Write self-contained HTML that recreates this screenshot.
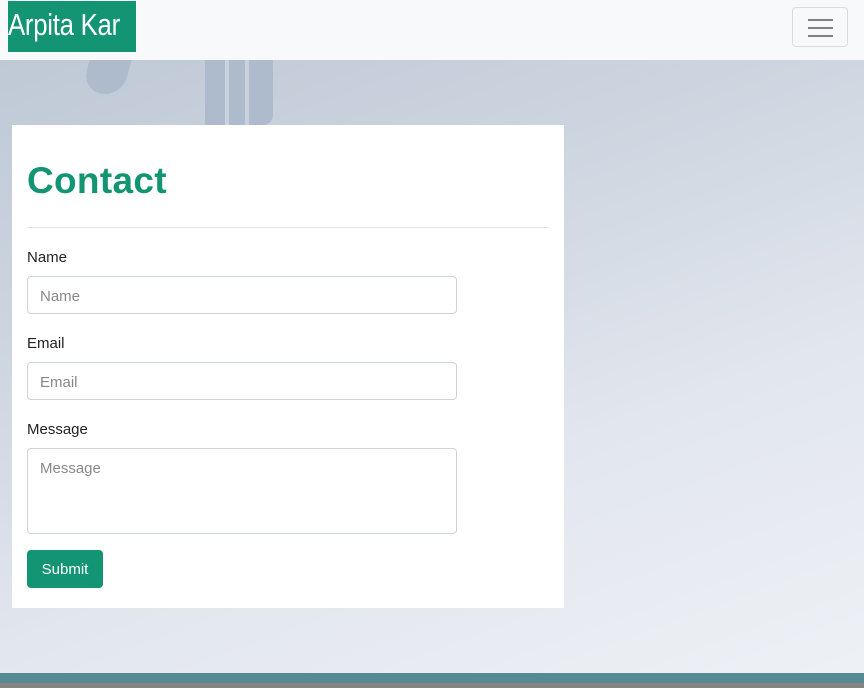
<!DOCTYPE html>
<html><head><meta charset="utf-8"><style>
*{box-sizing:border-box;margin:0;padding:0}
body{width:864px;height:688px;overflow:hidden;font-family:"Liberation Sans",sans-serif;position:relative;background:linear-gradient(160deg,#bcc6d3 0%,#cdd5e0 35%,#e2e6ee 65%,#eef1f5 100%)}
nav{position:absolute;left:0;top:0;width:864px;height:60px;background:#f8f9fa}
.brand{position:absolute;left:8px;top:1px;width:128px;height:51px;background:#139472;overflow:hidden}
.brand span{position:absolute;left:0;top:6px;color:#fff;font-size:31px;line-height:36px;white-space:nowrap;transform:scaleX(0.83);transform-origin:0 0;letter-spacing:-0.3px}
.tog{position:absolute;left:792px;top:7px;width:56px;height:40px;border:1px solid #dcdcdc;border-radius:4px}
.tog i{position:absolute;left:15px;width:25px;height:2px;background:#808080}
.deco1{position:absolute;left:85px;top:60px;width:42px;height:34px;background:#aebbcc;border-radius:0 0 20px 30px;transform:skewX(-15deg)}
.deco2{position:absolute;left:205px;top:60px;width:68px;height:65px;background:#aebbcc;border-radius:0 0 10px 0}
.deco2 b{position:absolute;top:0;width:4px;height:65px;background:#c9d2dc}
.card{position:absolute;left:12px;top:125px;width:552px;height:483px;background:#fff}
h1{position:absolute;left:15px;top:35px;font-size:37px;font-weight:bold;color:#139472;letter-spacing:0.3px}
hr{position:absolute;left:15px;top:102px;width:522px;border:0;border-top:1px solid #e5e5e5}
label{position:absolute;left:15px;font-size:15px;color:#222}
.in{position:absolute;left:15px;width:430px;border:1px solid #ced4da;border-radius:4px;font-size:15px;color:#888;padding-left:12px}
.btn{position:absolute;left:15px;top:425px;width:76px;height:38px;background:#139472;border-radius:4px;color:#fff;font-size:15px;line-height:40px;text-align:center}
.f1{position:absolute;left:0;top:673px;width:864px;height:10px;background:#558a90}
.f2{position:absolute;left:0;top:683px;width:864px;height:5px;background:#858585}
</style></head><body>
<div class="deco1"></div>
<div class="deco2"><b style="left:20px"></b><b style="left:40px"></b></div>
<nav><div class="brand"><span>Arpita Kar</span></div><div class="tog"><i style="top:11px"></i><i style="top:19px"></i><i style="top:27px"></i></div></nav>
<div class="card">
<h1>Contact</h1><hr>
<label style="top:124px">Name</label>
<div class="in" style="top:151px;height:38px;line-height:40px">Name</div>
<label style="top:210px">Email</label>
<div class="in" style="top:237px;height:38px;line-height:40px">Email</div>
<label style="top:296px">Message</label>
<div class="in" style="top:323px;height:86px;padding-top:11px">Message</div>
<div class="btn">Submit</div>
</div>
<div class="f1"></div><div class="f2"></div>
</body></html>
